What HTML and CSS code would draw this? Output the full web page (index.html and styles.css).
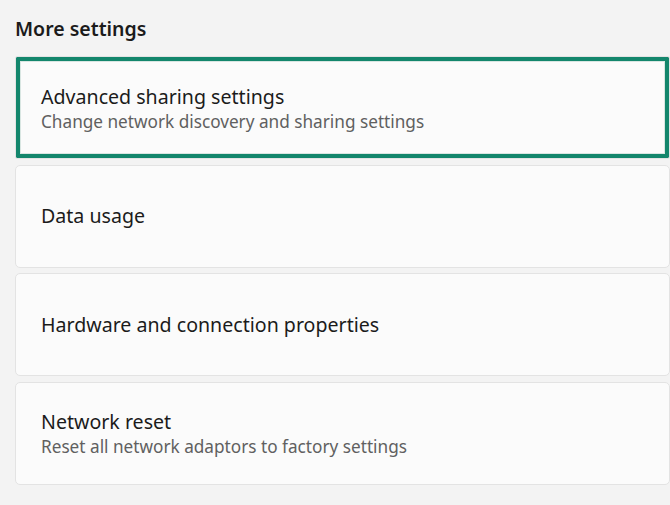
FILE: index.html
```html
<!DOCTYPE html>
<html lang="en">
<head>
<meta charset="utf-8">
<title>More settings</title>
<link rel="stylesheet" href="styles.css">
</head>
<body>
<main class="page">
  <h2 class="section-title">More settings</h2>
  <div class="cards">
    <div class="card card-focused">
      <div class="card-text">
        <div class="card-title">Advanced sharing settings</div>
        <div class="card-sub">Change network discovery and sharing settings</div>
      </div>
    </div>
    <div class="card">
      <div class="card-text single">
        <div class="card-title">Data usage</div>
      </div>
    </div>
    <div class="card">
      <div class="card-text single">
        <div class="card-title">Hardware and connection properties</div>
      </div>
    </div>
    <div class="card">
      <div class="card-text">
        <div class="card-title">Network reset</div>
        <div class="card-sub">Reset all network adaptors to factory settings</div>
      </div>
    </div>
  </div>
</main>
</body>
</html>
```
FILE: styles.css
```css
html, body {
  margin: 0;
  padding: 0;
  background: #f3f3f3;
  height: 100%;
  overflow: hidden;
}
.page {
  padding: 0 0 0 15px;
  font-family: "Noto Sans", "Open Sans", sans-serif;
  color: #1b1b1b;
}
.section-title {
  margin: 0;
  padding-top: 16px;
  height: 56px;
  box-sizing: border-box;
  font-size: 19.5px;
  line-height: 26px;
  font-weight: 600;
}
.cards {
  display: flex;
  flex-direction: column;
  gap: 5.67px;
  width: 655px;
}
.card {
  height: 103px;
  box-sizing: border-box;
  background: #fbfbfb;
  border: 1px solid #e3e3e3;
  border-radius: 5px;
  display: flex;
  align-items: center;
  padding-left: 25px;
}
.card-focused {
  box-shadow: inset 0 0 0 4px #13866c, inset 0 0 0 5px #d9e6e2;
  border-radius: 2px;
}
.card-text {
  display: flex;
  flex-direction: column;
  padding-top: 2px;
}
.card-text.single {
  padding-top: 0;
}
.card-title {
  font-size: 19.6px;
  line-height: 26px;
}
.card-sub {
  font-size: 17.2px;
  line-height: 24px;
  color: #606060;
}
```
